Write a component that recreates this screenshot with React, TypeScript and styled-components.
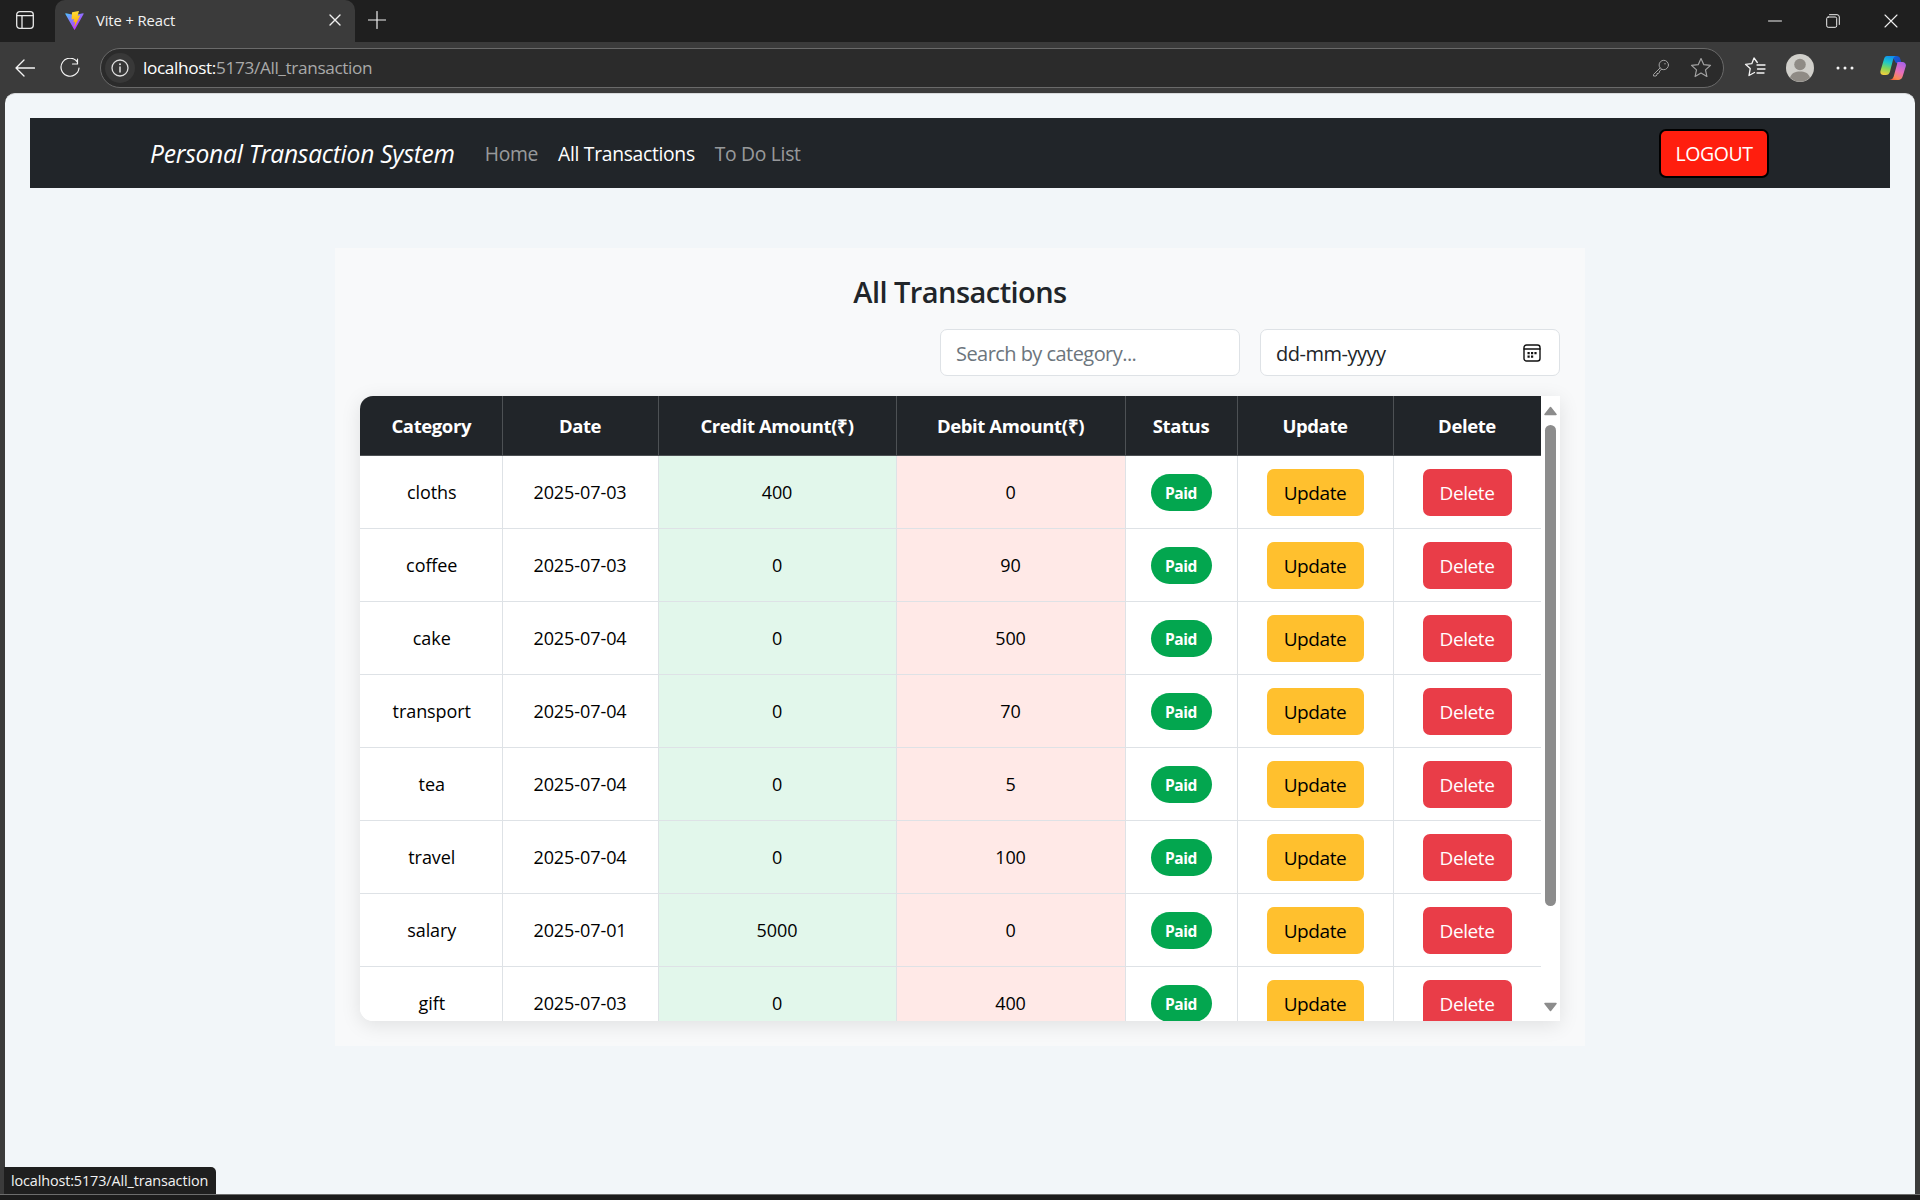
import React from "react";
import styled, { createGlobalStyle } from "styled-components";

const Global = createGlobalStyle`
  html, body { margin: 0; padding: 0; height: 100%; background: #3b3b3b; overflow: hidden; }
  #root { height: 100%; }
  * { box-sizing: border-box; }
`;

const FONT = `"Open Sans", "Liberation Sans", sans-serif`;

const Shell = styled.div`
  height: 1200px; width: 1920px; display: flex; flex-direction: column; position: relative;
  font-family: ${FONT}; background: #3b3b3b; overflow: hidden;
`;
const TabStrip = styled.div`
  height: 42px; background: #1f1f1f; display: flex; align-items: stretch; flex: none; color: #fff;
`;
const SideToggle = styled.div`
  width: 55px; display: flex; align-items: center; justify-content: center; padding: 0 5px 2px 0;
`;
const Tab = styled.div`
  width: 300px; background: #3b3b3b; border-radius: 10px 10px 0 0; display: flex; align-items: center;
  padding: 0 14px 2px 8px; font-size: 14.8px; color: #f2f2f2; letter-spacing: -0.1px;
`;
const TabIcon = styled.span`
  width: 21px; height: 21px; margin: 0 0 0 1px; display: flex; flex: none;
`;
const TabTitle = styled.span`
  margin-left: 11px; flex: 1;
`;
const IconSlot = styled.span`
  display: flex; align-items: center; justify-content: center; flex: none;
`;
const StarSlot = styled(IconSlot)`
  margin-left: 20px;
`;
const NewTab = styled.div`
  width: 40px; margin-left: 2px; display: flex; align-items: center; justify-content: center; padding-bottom: 2px;
`;
const WindowControls = styled.div`
  margin-left: auto; display: flex; align-items: center; width: 174px;
`;
const WinButton = styled.div`
  width: 58px; display: flex; justify-content: center; align-items: center;
`;
const Toolbar = styled.div`
  height: 51px; flex: none; display: flex; align-items: center; position: relative; color: #fff;
`;
const NavIcon = styled.div<{ $w: number }>`
  width: ${p => p.$w}px; flex: none; display: flex; justify-content: center; align-items: center;
`;
const AddressBar = styled.div`
  width: 1624px; flex: none; height: 40px; border: 1px solid #6a6a6a; border-radius: 20px; background: #2b2b2b; margin-left: 10px;
  display: flex; align-items: center; padding: 0 11px 0 4px;
`;
const InfoChip = styled.div`
  width: 30px; height: 30px; border-radius: 50%; background: #383838; display: flex; align-items: center; justify-content: center;
`;
const Url = styled.div`
  margin-left: 8px; font-size: 17.2px; color: #a9a9a9; letter-spacing: -0.35px; flex: 1;
`;
const UrlHost = styled.span`
  color: #fff;
`;
const RightIcons = styled.div`
  display: flex; align-items: center; flex: 1;
`;
const RightIcon = styled.div<{ $w: number }>`
  width: ${p => p.$w}px; flex: none; display: flex; justify-content: center; align-items: center;
`;
const Viewport = styled.div`
  flex: 1; margin: 0 5px; background: #f2f6f9; border-radius: 10px 10px 0 0; border-top: 1px solid #d8dadc;
  padding: 24px 25px 0; min-height: 0;
`;
const BottomEdge = styled.div`
  height: 6px; flex: none; border-top: 1px solid #6d6d6d; background: #1c1c1c;
`;
const Navbar = styled.nav`
  height: 70px; background: #212529; display: flex; align-items: center; padding: 0 121px 0 120px;
`;
const Brand = styled.a`
  font-size: 24.6px; font-style: italic; color: #fff; letter-spacing: -0.25px; margin-right: 30px; white-space: nowrap;
`;
const NavLink = styled.a<{ $active?: boolean }>`
  font-size: 19.3px; padding-top: 1px; color: ${p => (p.$active ? "#fff" : "rgba(255,255,255,.55)")}; margin-right: 20px; letter-spacing: -0.3px; white-space: nowrap;
`;
const Logout = styled.button`
  margin-left: auto; width: 110px; height: 49px; background: #ff1e0e; color: #fff; border: 2px solid #000;
  border-radius: 7px; font: 19.5px ${FONT}; letter-spacing: -0.45px; padding: 0;
`;
const Card = styled.section`
  width: 1250px; height: 798px; margin: 60px auto 0; background: #f8f9fa; padding: 0 25px; display: flex; flex-direction: column;
`;
const Title = styled.h2`
  margin: 23px 0 0; height: 41px; line-height: 41px; font-size: 29px; font-weight: 600; color: #212529; text-align: center; letter-spacing: -0.55px;
`;
const Filters = styled.div`
  display: flex; justify-content: flex-end; gap: 20px; margin-top: 17px;
`;
const FilterBox = styled.div`
  width: 300px; height: 47px; border: 1px solid #dee2e6; border-radius: 7px; background: #fff; padding: 2px 18px 0 15px;
  font-size: 20px; letter-spacing: -0.5px; display: flex; align-items: center; justify-content: space-between;
`;
const SearchInput = styled.input`
  border: 0; outline: 0; padding: 0; width: 100%; background: transparent; font: 20px ${FONT}; letter-spacing: -0.55px; color: #212529;
  &::placeholder { color: #6c757d; opacity: 1; }
`;
const DateText = styled.span`
  color: #212529;
`;
const CalendarIcon = styled.svg`
  margin-top: -2px;
`;
const TableFrame = styled.div`
  margin-top: 20px; height: 625px; display: flex; background: #fff; border-radius: 13px 0 0 13px;
  box-shadow: 0 4px 20px rgba(0,0,0,.1); overflow: hidden;
`;
const TableClip = styled.div`
  flex: 1; overflow: hidden;
`;
const Table = styled.table`
  width: 1181px; table-layout: fixed; border-collapse: collapse; font-size: 18px; color: #000; text-align: center;
`;
const HeadCell = styled.th`
  height: 59px; background: #212529; color: #fff; font-weight: 700; font-size: 18.5px; letter-spacing: -0.4px;
  border: 1px solid #4d5154; border-top: 0; padding: 0;
  &:first-child { border-left: 0; padding-left: 1px; }
`;
const Cell = styled.td<{ $tone?: "credit" | "debit" }>`
  height: 73px; padding: 0; letter-spacing: -0.08px; border: 1px solid #dee2e6;
  background: ${p => (p.$tone === "credit" ? "#e2f7eb" : p.$tone === "debit" ? "#ffe9e7" : "#fff")};
  &:first-child { border-left: 0; padding-left: 2px; }
`;
const Badge = styled.span`
  display: inline-flex; width: 61px; height: 37px; margin-top: 2px; border-radius: 19px; background: #03a64f; color: #fff;
  align-items: center; justify-content: center; font-size: 15.5px; font-weight: 700; letter-spacing: -0.4px; vertical-align: middle;
`;
const ActionButton = styled.button<{ $kind: "update" | "delete" }>`
  height: 47px; margin-top: 2px; width: ${p => (p.$kind === "update" ? 97 : 89)}px; border: 0; border-radius: 7px; padding: 0;
  background: ${p => (p.$kind === "update" ? "#ffc02e" : "#e93d48")};
  color: ${p => (p.$kind === "update" ? "#000" : "#fff")};
  font: 19px ${FONT}; letter-spacing: -0.4px; vertical-align: middle;
`;
const ScrollRail = styled.div`
  width: 19px; flex: none; background: #fff; display: flex; flex-direction: column; align-items: center;
`;
const RailArrow = styled.svg<{ $down?: boolean }>`
  flex: none; margin: ${p => (p.$down ? "auto 0 9px" : "10px 0 0")};
  transform: ${p => (p.$down ? "rotate(180deg)" : "none")};
`;
const Thumb = styled.div`
  width: 11px; height: 481px; margin-top: 9px; border-radius: 6px; background: #8c8c8c;
`;
const StatusBubble = styled.div`
  position: absolute; left: 4px; bottom: 6px; height: 27px; width: 212px; background: #1f1f1f; color: #f2f2f2;
  border-radius: 0 5px 0 0; font-size: 14.4px; letter-spacing: -0.12px; padding: 0 0 0 7px; line-height: 27px; white-space: nowrap;
`;

const rows: [string, string, number, number][] = [
  ["cloths", "2025-07-03", 400, 0],
  ["coffee", "2025-07-03", 0, 90],
  ["cake", "2025-07-04", 0, 500],
  ["transport", "2025-07-04", 0, 70],
  ["tea", "2025-07-04", 0, 5],
  ["travel", "2025-07-04", 0, 100],
  ["salary", "2025-07-01", 5000, 0],
  ["gift", "2025-07-03", 0, 400],
];
const widths = [142, 156, 238, 229, 112, 156, 148];
const heads = ["Category", "Date", "Credit Amount(₹)", "Debit Amount(₹)", "Status", "Update", "Delete"];

const S = { fill: "none", stroke: "currentColor", strokeLinecap: "round" as const, strokeLinejoin: "round" as const };

const ViteLogo = () => (
  <svg width="21" height="21" viewBox="0 0 32 32">
    <defs>
      <linearGradient id="va" x1="6" y1="33" x2="235" y2="344" gradientUnits="userSpaceOnUse" gradientTransform="scale(.08)">
        <stop stopColor="#41D1FF" /><stop offset="1" stopColor="#BD34FE" />
      </linearGradient>
      <linearGradient id="vb" x1="194" y1="8" x2="236" y2="292" gradientUnits="userSpaceOnUse" gradientTransform="scale(.08)">
        <stop stopColor="#FFEA83" /><stop offset=".08" stopColor="#FFDD35" /><stop offset="1" stopColor="#FFA800" />
      </linearGradient>
    </defs>
    <path d="M29.88 6.146 16.7 29.715a.7.7 0 0 1-1.22.006L2.04 6.148a.7.7 0 0 1 .74-1.04l13.2 2.36a.7.7 0 0 0 .25 0l12.9-2.35a.7.7 0 0 1 .75 1.03Z" fill="url(#va)" />
    <path d="M22.26 1.64 12.5 3.55a.36.36 0 0 0-.29.33l-.6 10.12a.36.36 0 0 0 .44.37l2.72-.63a.36.36 0 0 1 .43.42l-.8 3.93a.36.36 0 0 0 .45.42l1.68-.51a.36.36 0 0 1 .46.42l-1.29 6.22c-.08.39.44.6.66.27l.14-.22 8-15.96a.36.36 0 0 0-.39-.52l-2.81.54a.36.36 0 0 1-.41-.45l1.84-6.36a.36.36 0 0 0-.42-.46Z" fill="url(#vb)" />
  </svg>
);

const Copilot = () => (
  <svg width="26" height="26" viewBox="0 0 26 26">
    <defs>
      <linearGradient id="c1" x1="10" y1="1" x2="5" y2="20" gradientUnits="userSpaceOnUse">
        <stop stopColor="#0f8ff0" /><stop offset=".35" stopColor="#1ec8c8" /><stop offset=".65" stopColor="#7fd65a" /><stop offset="1" stopColor="#f5cf3c" />
      </linearGradient>
      <linearGradient id="c2" x1="22" y1="7" x2="13" y2="25" gradientUnits="userSpaceOnUse">
        <stop stopColor="#a861e8" /><stop offset=".5" stopColor="#ea6fb8" /><stop offset=".85" stopColor="#f88a52" /><stop offset="1" stopColor="#f4603a" />
      </linearGradient>
      <linearGradient id="c3" x1="12" y1="1" x2="21" y2="9" gradientUnits="userSpaceOnUse">
        <stop stopColor="#0c62d8" /><stop offset="1" stopColor="#2546c8" />
      </linearGradient>
    </defs>
    <path d="M12 1h4.500c2 0 3.200 1 3.700 2.700L21.500 8H16z" fill="url(#c3)" />
    <path d="M7 1h9.500c-1.600 0-2.700.9-3.200 2.800L10 16.500C9.400 19 8 20 6 20H3.500C1 20-.2 18 .6 15.500L4 4C4.600 2 5.500 1 7 1Z" fill="url(#c1)" />
    <path d="M17.500 7h4.800c2.700 0 4.200 2 3.400 4.600l-3 9.600c-.7 2.500-2.300 3.800-4.700 3.800H8.500c2.600 0 4.300-1 5.100-3.200L17 9.500c.1-1 .3-2 .5-2.500Z" fill="url(#c2)" />
  </svg>
);

export default function App() {
  return (
    <Shell>
      <Global />
      <TabStrip>
        <SideToggle>
          <svg width="18" height="18" viewBox="0 0 18 18" color="#e8e8e8">
            <rect x=".7" y=".7" width="16.600" height="16.600" rx="3" {...S} strokeWidth="1.300" />
            <path d="M1 4.700h16M6 4.700v12.600" {...S} strokeWidth="1.300" />
          </svg>
        </SideToggle>
        <Tab>
          <TabIcon><ViteLogo /></TabIcon>
          <TabTitle>Vite + React</TabTitle>
          <IconSlot>
            <svg width="12" height="12" viewBox="0 0 12 12" color="#f0f0f0"><path d="M1 1l10 10M11 1L1 11" {...S} strokeWidth="1.400" /></svg>
          </IconSlot>
        </Tab>
        <NewTab>
          <svg width="18" height="18" viewBox="0 0 18 18" color="#f0f0f0"><path d="M9 0.500v17M0.500 9h17" {...S} strokeWidth="1.200" /></svg>
        </NewTab>
        <WindowControls>
          <WinButton><svg width="14" height="2" viewBox="0 0 14 2" color="#f0f0f0"><path d="M0.500 1h13" {...S} strokeWidth="1" /></svg></WinButton>
          <WinButton><svg width="14" height="14" viewBox="0 0 14 14" color="#f0f0f0"><rect x=".7" y="3" width="10" height="10.300" rx="1.500" {...S} /><path d="M3.500 .7h7.500a2.300 2.300 0 0 1 2.300 2.300v7.500" {...S} /></svg></WinButton>
          <WinButton><svg width="14" height="14" viewBox="0 0 14 14" color="#f0f0f0"><path d="M1 1l12 12M13 1L1 13" {...S} strokeWidth="1.100" /></svg></WinButton>
        </WindowControls>
      </TabStrip>
      <Toolbar>
        <NavIcon $w={50}>
          <svg width="20" height="18" viewBox="0 0 20 18" color="#f5f5f5"><path d="M19.500 9H1M9 1L1 9l8 8" {...S} strokeWidth="1.300" /></svg>
        </NavIcon>
        <NavIcon $w={40}>
          <svg width="20" height="20" viewBox="0 0 20 20" color="#f5f5f5"><path d="M17 3.500A9 9 0 1 0 19 10M17.500 1v5h-5" {...S} strokeWidth="1.200" /></svg>
        </NavIcon>
        <AddressBar>
          <InfoChip>
            <svg width="18" height="18" viewBox="0 0 18 18" color="#e0e0e0"><circle cx="9" cy="9" r="8" {...S} strokeWidth="1.300" /><path d="M9 8v5" {...S} strokeWidth="1.500" /><circle cx="9" cy="5.300" r="1" fill="currentColor" /></svg>
          </InfoChip>
          <Url><UrlHost>localhost:</UrlHost>5173/All_transaction</Url>
          <IconSlot>
            <svg width="18" height="18" viewBox="0 0 18 18" color="#a3a3a3"><circle cx="11.800" cy="6" r="4.700" {...S} strokeWidth="1" /><circle cx="13" cy="4.800" r=".7" fill="currentColor" /><path d="M8 9L1.500 15.500v1.500h2.500l1-1v-1.500h1.500L7.500 13v-1l2-1.500" {...S} strokeWidth="1" /></svg>
          </IconSlot>
          <StarSlot>
            <svg width="22" height="21" viewBox="0 0 22 21" color="#a3a3a3"><path d="M11 1.500l2.800 6.200 6.700.7-5 4.500 1.400 6.600L11 16.100l-5.900 3.400 1.400-6.600-5-4.500 6.700-.7z" {...S} strokeWidth="1.200" /></svg>
          </StarSlot>
        </AddressBar>
        <RightIcons>
          <RightIcon $w={62}>
            <svg width="22" height="21" viewBox="0 0 22 21" color="#f5f5f5"><path d="M13.300 5.500L10 1 7.800 6.700 1.500 7.300l4.700 4.300L5 18.500l5.500-3M13 8h8M13.500 12h7.500M13 16h7" {...S} strokeWidth="1.300" /></svg>
          </RightIcon>
          <RightIcon $w={28}>
            <svg width="28" height="28" viewBox="0 0 28 28"><circle cx="14" cy="14" r="14" fill="#d0cfca" /><circle cx="14" cy="10.500" r="5.800" fill="#8f8b85" /><path d="M4 23.500C5.500 19 9.500 17.500 14 17.500s8.500 1.500 10 6A14 14 0 0 1 4 23.500Z" fill="#8f8b85" /></svg>
          </RightIcon>
          <RightIcon $w={62}>
            <svg width="18" height="4" viewBox="0 0 18 4" color="#f5f5f5"><circle cx="2" cy="2" r="1.500" fill="currentColor" /><circle cx="9" cy="2" r="1.500" fill="currentColor" /><circle cx="16" cy="2" r="1.500" fill="currentColor" /></svg>
          </RightIcon>
          <RightIcon $w={34}><Copilot /></RightIcon>
        </RightIcons>
      </Toolbar>
      <Viewport>
        <Navbar>
          <Brand>Personal Transaction System</Brand>
          <NavLink>Home</NavLink>
          <NavLink $active>All Transactions</NavLink>
          <NavLink>To Do List</NavLink>
          <Logout>LOGOUT</Logout>
        </Navbar>
        <Card>
          <Title>All Transactions</Title>
          <Filters>
            <FilterBox><SearchInput placeholder="Search by category..." readOnly /></FilterBox>
            <FilterBox>
              <DateText>dd-mm-yyyy</DateText>
              <CalendarIcon width="18" height="18" viewBox="0 0 18 18" color="#111"><rect x="1" y="1" width="16" height="16" rx="2.500" {...S} strokeWidth="1.400" /><path d="M1 5h16" {...S} strokeWidth="1.400" /><path d="M4.500 8h2.200v2.200H4.500zM8 8h2.200v2.200H8zM11.400 8h2.200v2.200h-2.200zM4.500 11.500h2.200v2.200H4.500zM8 11.500h2.200v2.200H8z" fill="currentColor" /></CalendarIcon>
            </FilterBox>
          </Filters>
          <TableFrame>
            <TableClip>
              <Table>
                <colgroup>{widths.map((w, i) => <col key={i} width={w} />)}</colgroup>
                <thead>
                  <tr>{heads.map(h => <HeadCell key={h}>{h}</HeadCell>)}</tr>
                </thead>
                <tbody>
                  {rows.map(([cat, date, cr, db]) => (
                    <tr key={cat}>
                      <Cell>{cat}</Cell>
                      <Cell>{date}</Cell>
                      <Cell $tone="credit">{cr}</Cell>
                      <Cell $tone="debit">{db}</Cell>
                      <Cell><Badge>Paid</Badge></Cell>
                      <Cell><ActionButton $kind="update">Update</ActionButton></Cell>
                      <Cell><ActionButton $kind="delete">Delete</ActionButton></Cell>
                    </tr>
                  ))}
                </tbody>
              </Table>
            </TableClip>
            <ScrollRail>
              <RailArrow width="13" height="10" viewBox="0 0 13 10"><path d="M6.500 1.500L12 8.500H1z" fill="#8c8c8c" stroke="#8c8c8c" strokeWidth="1.500" strokeLinejoin="round" /></RailArrow>
              <Thumb />
              <RailArrow $down width="13" height="10" viewBox="0 0 13 10"><path d="M6.500 1.500L12 8.500H1z" fill="#8c8c8c" stroke="#8c8c8c" strokeWidth="1.500" strokeLinejoin="round" /></RailArrow>
            </ScrollRail>
          </TableFrame>
        </Card>
      </Viewport>
      <BottomEdge />
      <StatusBubble>localhost:5173/All_transaction</StatusBubble>
    </Shell>
  );
}
